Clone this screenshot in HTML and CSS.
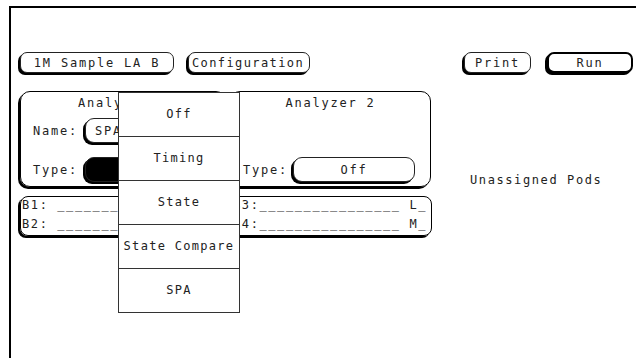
FILE: index.html
```html
<!DOCTYPE html>
<html>
<head>
<meta charset="utf-8">
<link rel="stylesheet" href="styles.css">
</head>
<body>
<div class="screen">
  <div class="toprow">
    <div class="btn btn-sample">1M Sample LA B</div>
    <div class="btn btn-config">Configuration</div>
    <div class="btn btn-print">Print</div>
    <div class="btn btn-run">Run</div>
  </div>
  <div class="main">
    <div class="leftcol">
      <div class="analyzers">
        <div class="analyzer an1">
          <div class="title">Analyzer 1</div>
          <div class="row row-name">
            <span class="label">Name:</span>
            <div class="btn field name">SPA</div>
          </div>
          <div class="row row-type">
            <span class="label">Type:</span>
            <div class="btn field selected">SPA</div>
          </div>
        </div>
        <div class="analyzer an2">
          <div class="title">Analyzer 2</div>
          <div class="row row-name empty"></div>
          <div class="row row-type">
            <span class="label">Type:</span>
            <div class="btn field">Off</div>
          </div>
        </div>
      </div>
      <div class="pods">
        <div class="pod">B1: _______</div>
        <div class="pod">B3:________________ L_</div>
        <div class="pod">B2: _______</div>
        <div class="pod">B4:________________ M_</div>
      </div>
    </div>
    <div class="rightcol">
      <div class="unassigned">Unassigned Pods</div>
    </div>
  </div>
  <div class="menu">
    <div class="item">Off</div>
    <div class="item">Timing</div>
    <div class="item">State</div>
    <div class="item">State Compare</div>
    <div class="item">SPA</div>
  </div>
</div>
</body>
</html>
```

FILE: styles.css
```css
html, body {
  margin: 0;
  padding: 0;
  background: #fff;
  overflow: hidden;
  width: 636px;
  height: 358px;
}

body {
  font-family: "DejaVu Sans Mono", "Liberation Mono", monospace;
  font-size: 12px;
  letter-spacing: 1.8px;
  color: #222;
}

.screen {
  position: relative;
  margin: 6px 0 0 9px;
  border-top: 2px solid #000;
  border-left: 2px solid #000;
  height: 352px;
  box-sizing: border-box;
}

.toprow {
  display: flex;
  padding: 44px 0 0 9px;
  height: 21px;
}

.btn {
  box-sizing: border-box;
  border: 1px solid #222;
  border-radius: 7px;
  box-shadow: -2px 2px 0 #000;
  height: 21px;
  line-height: 21px;
  text-align: center;
  background: #fff;
  white-space: nowrap;
}

.btn-sample { width: 154px; }
.btn-config { width: 122px; margin-left: 14px; text-align: left; padding-left: 3px; letter-spacing: 1.4px; }
.btn-print { width: 67px; margin-left: 154px; }
.btn-run {
  width: 86px;
  margin-left: 16px;
  border: 2px solid #000;
  line-height: 19px;
}

.main {
  display: flex;
  margin-top: 18px;
}

.leftcol {
  padding-left: 9px;
  width: 412px;
}

.analyzers {
  display: flex;
  gap: 4px;
}

.analyzer {
  box-sizing: border-box;
  height: 96px;
  border: 1px solid #000;
  border-radius: 10px;
  box-shadow: -2px 2px 0 #000;
  display: flex;
  flex-direction: column;
  padding-left: 12px;
}

.an1 { width: 206px; }
.an2 { width: 201px; }

.title {
  margin-top: 3px;
  line-height: 16px;
  height: 16px;
  text-align: center;
  padding-right: 12px;
}

.row {
  display: flex;
  align-items: center;
  height: 25px;
}

.row-name { margin-top: 7px; }
.row-type { margin-top: 14px; }

.label { width: 52px; }
.an2 .label { width: 50px; }

.field {
  width: 122px;
  height: 25px;
  line-height: 25px;
  border-radius: 9px;
}

.field.name {
  text-align: left;
  padding-left: 9px;
}

.field.selected {
  background: #000;
  color: #000;
}

.pods {
  box-sizing: border-box;
  margin-top: 9px;
  height: 40px;
  border: 1px solid #000;
  border-radius: 8px;
  box-shadow: -2px 2px 0 #000;
  display: grid;
  grid-template-columns: 96px 1fr;
  column-gap: 115px;
  padding: 0 0 0 1px;
  line-height: 16px;
  letter-spacing: 1.6px;
  white-space: nowrap;
  overflow: hidden;
}

.rightcol {
  margin-left: 38px;
  padding-top: 81px;
}

.unassigned {
  line-height: 16px;
  white-space: nowrap;
  letter-spacing: 1.6px;
}

.menu {
  position: absolute;
  left: 107px;
  top: 84px;
  width: 122px;
  box-sizing: border-box;
  border: 1px solid #333;
  background: #fff;
  letter-spacing: 1.3px;
}

.item {
  height: 43px;
  line-height: 43px;
  text-align: center;
  white-space: nowrap;
}

.item + .item {
  border-top: 1px solid #333;
}
```
